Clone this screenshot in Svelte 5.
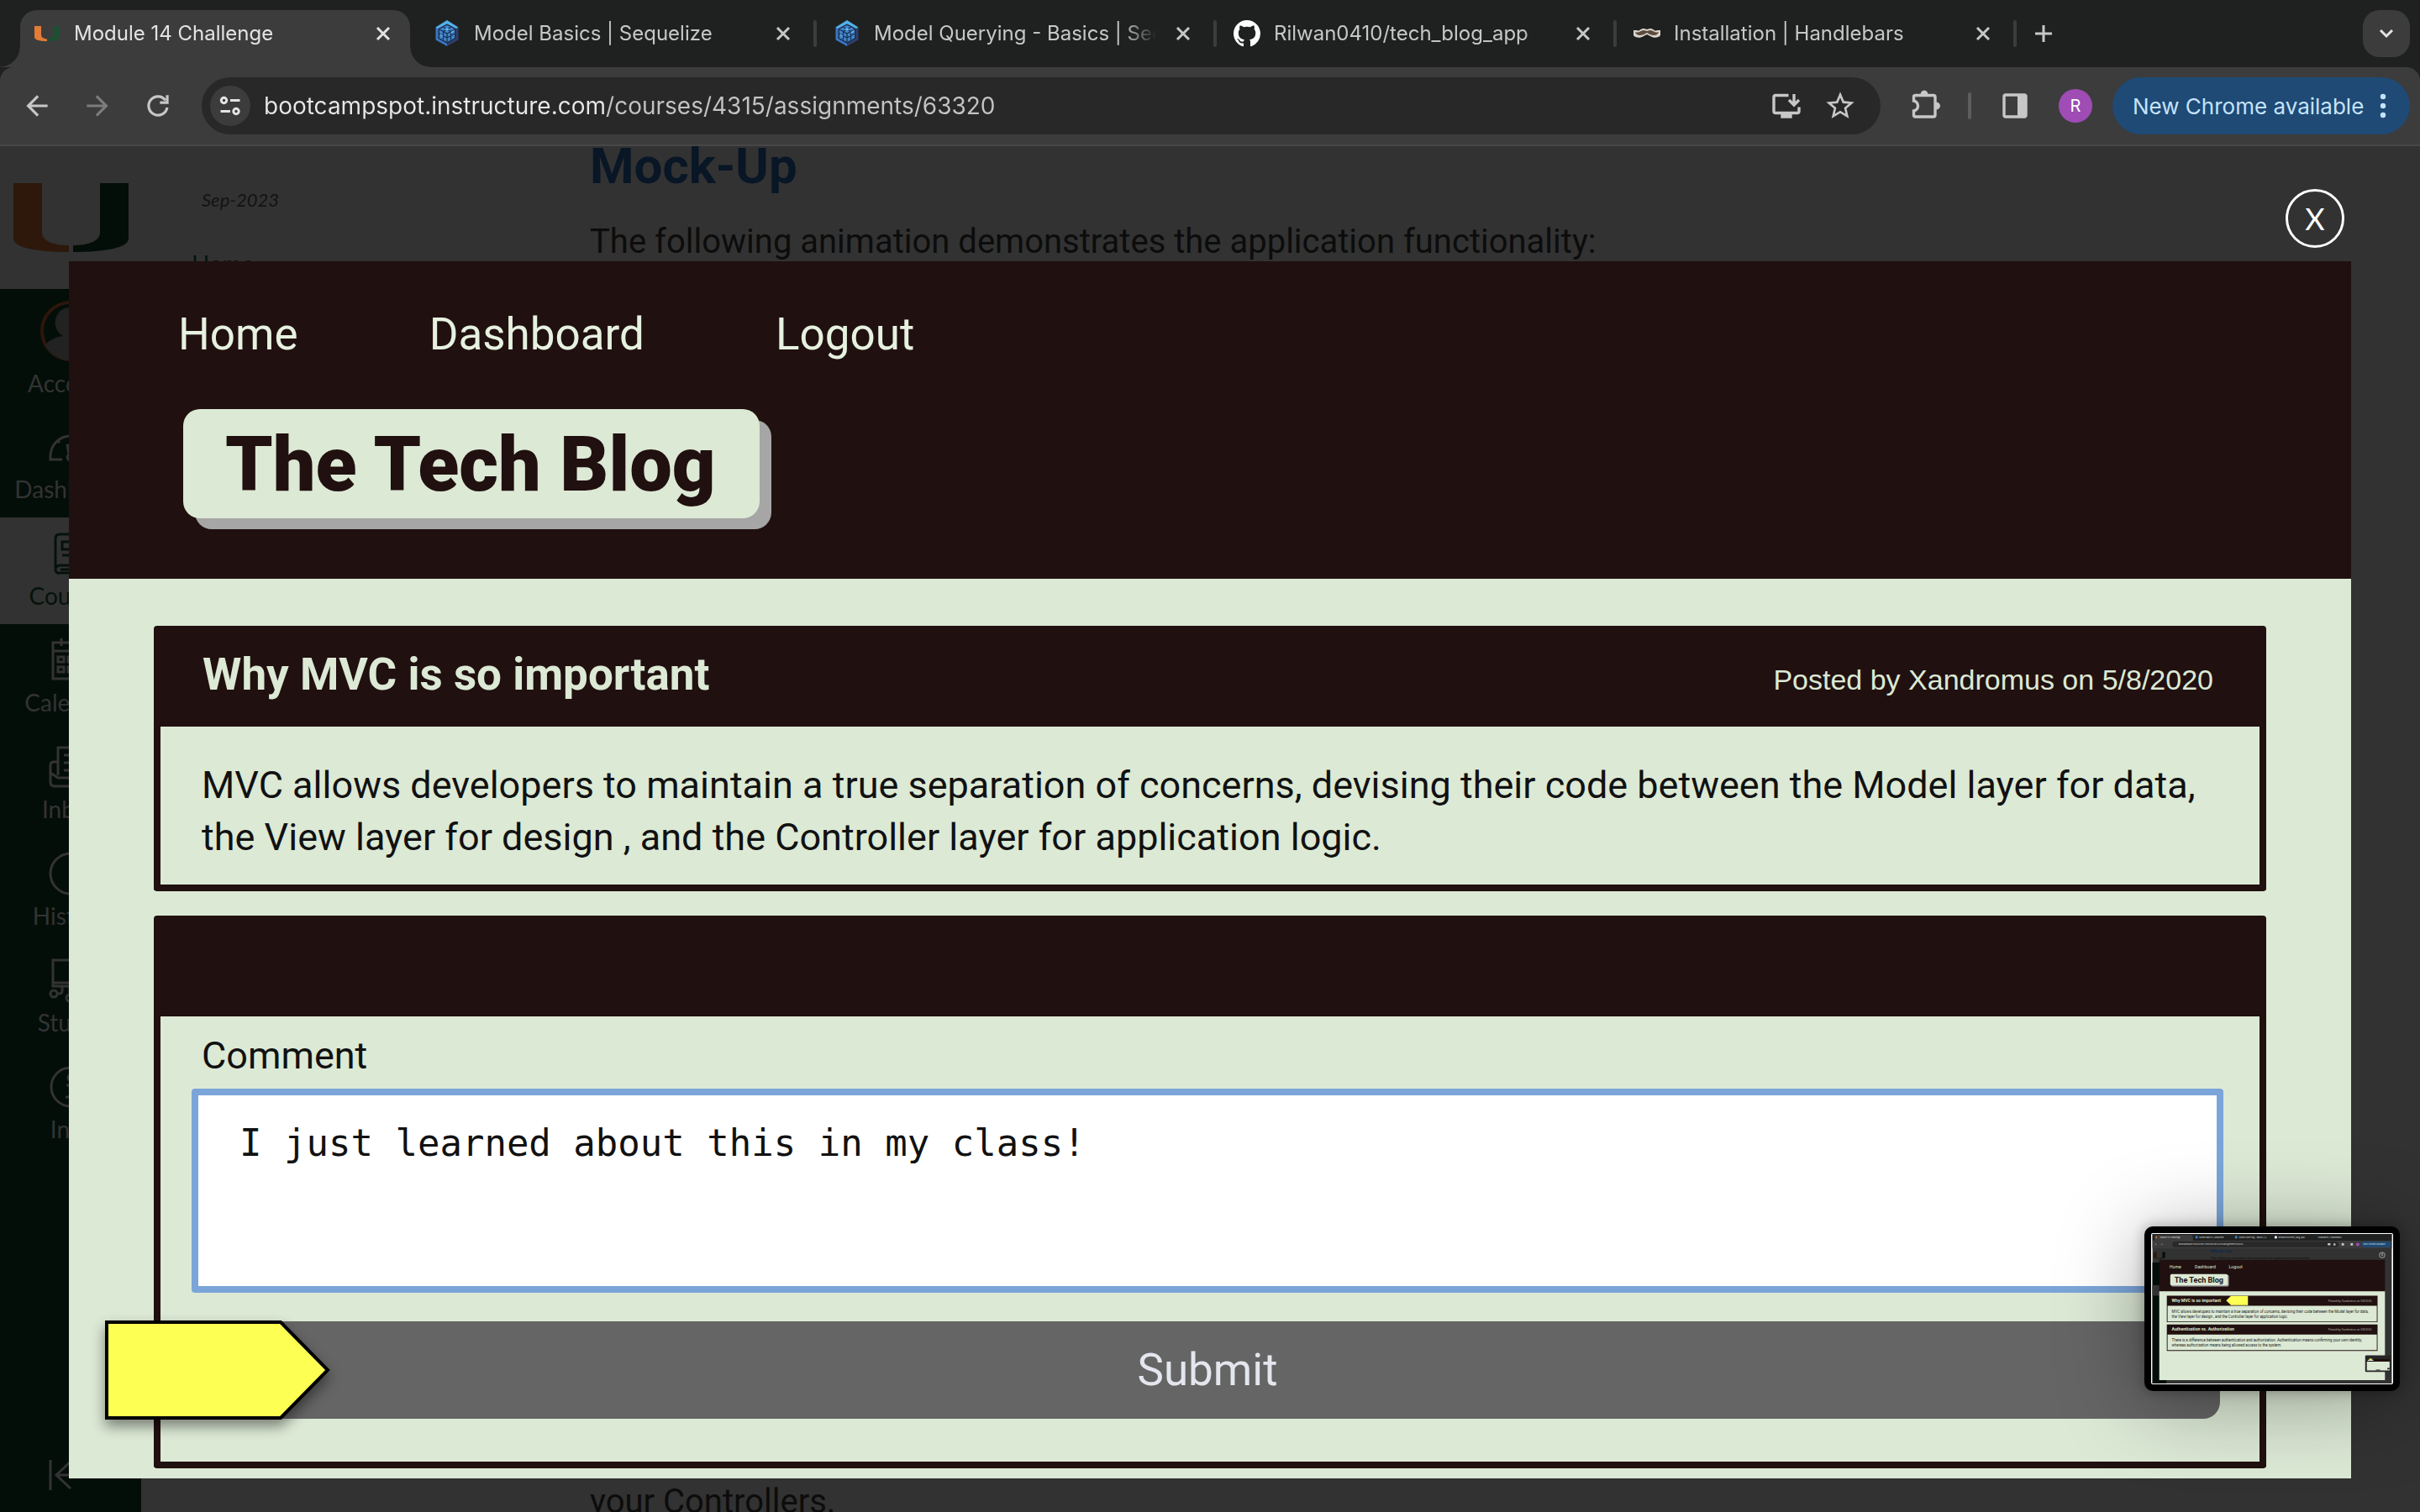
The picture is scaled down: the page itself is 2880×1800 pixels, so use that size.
<script>
  const tabs = [
    { title: 'Module 14 Challenge', icon: 'u', active: true },
    { title: 'Model Basics | Sequelize', icon: 'sequelize' },
    { title: 'Model Querying - Basics | Sequelize', icon: 'sequelize' },
    { title: 'Rilwan0410/tech_blog_app', icon: 'github' },
    { title: 'Installation | Handlebars', icon: 'handlebars' }
  ];
  const sideLinks = [
    { label: 'Dashboard', icon: 'dashboard' },
    { label: 'Courses', icon: 'courses', active: true },
    { label: 'Calendar', icon: 'calendar' },
    { label: 'Inbox', icon: 'inbox' },
    { label: 'History', icon: 'history' },
    { label: 'Studio', icon: 'studio' },
    { label: 'Info', icon: 'info' }
  ];
  let url = $state('bootcampspot.instructure.com/courses/4315/assignments/63320');
  let comment = $state('I just learned about this in my class!');
</script>

{#snippet favicon(name)}
  {#if name === 'u'}
    <svg class="favicon" viewBox="0 0 32 32" aria-hidden="true">
      <path fill="#e27c36" d="M1 7h8v10c0 3 2 5 7 5.400v2.600C6 25 1 23.500 1 20z" />
      <path fill="#1d5033" d="M31 7h-8v10c0 3-2 5-7 5.400v2.600c10 0 15-1.500 15-5z" />
    </svg>
  {:else if name === 'sequelize'}
    <svg class="favicon" viewBox="0 0 32 32" aria-hidden="true">
      <path fill="#3b76c3" d="M16 1 2.500 8.500v15L16 31z" />
      <path fill="#2f406a" d="M16 1l13.500 7.500v15L16 31z" />
      <path fill="#52b0e7" d="M16 0l13.500 8.500-3 1.500L16 4.500 5.500 10l-3-1.500z" />
      <path fill="#1d3050" d="M16 4.500 26.500 10v12L16 28 5.500 22V10z" />
      <path fill="#3f86cf" d="M16 6l9 4.800v10.400L16 26l-9-4.800V10.800z" />
      <path fill="none" stroke="#1d3050" stroke-width="1.300" d="M7 11l9 5 9-5M16 16v10M11.500 8.500l9 5v10M20.500 8.500l-9 5v10M7 16l9 5 9-5" />
      <path fill="#62b8ec" d="M16 9.200l3 1.700-3 1.700-3-1.700zM20.500 14l4-2v1.600l-4 2.200zM8 16.500l3 1.700v1.500l-3-1.700z" />
    </svg>
  {:else if name === 'github'}
    <svg class="favicon" viewBox="0 0 16 16" aria-hidden="true">
      <path fill="#fff" d="M8 0C3.580 0 0 3.580 0 8c0 3.540 2.290 6.530 5.470 7.590.4.070.55-.17.55-.38 0-.19-.01-.82-.01-1.490-2.010.37-2.530-.49-2.690-.94-.09-.23-.48-.94-.82-1.130-.28-.15-.68-.52-.01-.53.63-.01 1.080.58 1.230.82.72 1.210 1.870.87 2.330.66.07-.52.28-.87.51-1.070-1.780-.2-3.640-.89-3.640-3.950 0-.87.31-1.590.82-2.150-.08-.2-.36-1.020.08-2.120 0 0 .67-.21 2.200.82.64-.18 1.320-.27 2-.27s1.360.09 2 .27c1.530-1.040 2.200-.82 2.200-.82.44 1.100.16 1.920.08 2.120.51.56.82 1.270.82 2.150 0 3.070-1.870 3.750-3.650 3.950.29.25.54.73.54 1.480 0 1.070-.01 1.930-.01 2.200 0 .21.15.46.55.38A8.010 8.010 0 0 0 16 8c0-4.420-3.580-8-8-8z" />
    </svg>
  {:else}
    <svg class="favicon" viewBox="0 0 32 32" aria-hidden="true">
      <path fill="#d9d4ce" d="M0 12h4c3 2 4-2 8-2 2 0 3 1 4 1s2-1 4-1c4 0 5 4 8 2h4v6c-2 3-8 4-12 1l-4-2-4 2c-4 3-10 2-12-1z" />
      <path fill="#5c4a3d" d="M2 14c5 2 6-2 10-2 2 0 3 1 4 1s2-1 4-1c4 0 5 4 10 2-1 5-8 5-14 1-6 4-13 4-14-1z" />
    </svg>
  {/if}
{/snippet}

{#snippet sideIcon(name)}
  <svg class="side-icon" viewBox="0 0 52 52" aria-hidden="true">
    {#if name === 'dashboard'}
      <path d="M16 41H2v-4a24 24 0 0 1 48 0v4H36M10 18l3 3M42 18l-3 3M22 23l2 12a4 4 0 1 0 6 2z" />
    {:else if name === 'courses'}
      <path d="M8 44V8q0-5 5-5h31v37H14q-6 0-6 5t6 4h30M16 12h20v9H16zM16 28h20M14 45h28" />
    {:else if name === 'calendar'}
      <path d="M5 5h42v43H5zM5 15h42M15 0v9M37 0v9M11 22h7v6h-7zM23 22h7v6h-7zM35 22h7v6h-7zM11 34h7v6h-7zM23 34h7v6h-7z" />
    {:else if name === 'inbox'}
      <path d="M11 36V3h30v33M11 20H6q-4 0-4 4v20q0 5 5 5h38q5 0 5-5V24q0-4-4-4h-5M2 33l9 6h30l9-6M18 12h16M18 21h16M18 30h16" />
    {:else if name === 'history'}
      <path d="M26 2a24 24 0 1 1 0 48 24 24 0 1 1 0-48zM26 12v15l9 6" />
    {:else if name === 'studio'}
      <path d="M5 2h42v31H5zM5 29h42M16 34v5q0 3-5 3M25 34v8M36 34v8M30 12l9 5-9 5z" />
      <circle cx="6" cy="42" r="4" /><circle cx="25" cy="47" r="4" /><circle cx="42" cy="43" r="4" />
    {:else}
      <circle cx="26" cy="26" r="23" /><circle cx="26" cy="15" r="3" /><path d="M21 24h7v14M20 38h13" />
    {/if}
  </svg>
{/snippet}

<div class="browser">
  <header class="chrome">
    <div class="tab-strip">
      {#each tabs as tab, i}
        <div class="slot">
          <div class="tab" class:active={tab.active}>
            {@render favicon(tab.icon)}
            <span class="tab-title">{tab.title}</span>
            <button class="icon-button close" aria-label="Close tab">
              <svg viewBox="0 0 32 32"><path d="M9 9l14 14M23 9 9 23" /></svg>
            </button>
          </div>
          <span class="divider" class:hidden={i === 0}></span>
        </div>
      {/each}
      <button class="icon-button new-tab" aria-label="New tab">
        <svg viewBox="0 0 32 32"><path d="M16 6v20M6 16h20" /></svg>
      </button>
      <button class="tab-search" aria-label="Search tabs">
        <svg viewBox="0 0 32 32"><path d="M9 12l7 7 7-7" /></svg>
      </button>
    </div>

    <div class="toolbar">
      <div class="history-buttons">
        <button class="tool" aria-label="Back"><svg viewBox="0 0 24 24"><path d="M20 11H7.830l5.590-5.590L12 4l-8 8 8 8 1.410-1.410L7.830 13H20z" /></svg></button>
        <button class="tool dim" aria-label="Forward"><svg viewBox="0 0 24 24"><path d="M4 11h12.170l-5.590-5.590L12 4l8 8-8 8-1.410-1.410L16.170 13H4z" /></svg></button>
        <button class="tool line" aria-label="Reload"><svg viewBox="0 0 24 24"><path d="M18.900 13.200A7 7 0 1 1 17.600 7.800M19 4v5.500h-5.500" /></svg></button>
      </div>
      <div class="omnibox">
        <button class="site-info" aria-label="Site information">
          <svg viewBox="0 0 48 48"><circle cx="16.500" cy="17.500" r="3.200" /><circle cx="31" cy="30.500" r="3.200" /><path d="M24 17.500h11.500M12.500 30.500H24" /></svg>
        </button>
        <input class="url" aria-label="Address" bind:value={url} />
        <button class="tool line" aria-label="Install app">
          <svg viewBox="0 0 40 40"><path stroke-width="3.400" d="M22.500 7.500H7q-2 0-2 2v17q0 2 2 2h26q2 0 2-2v-5M29 6v12M23 13l6 6 6-6" /><path class="solid" d="M13.300 28h13.400v6.700H13.300z" /></svg>
        </button>
        <button class="tool" aria-label="Bookmark this tab">
          <svg viewBox="0 0 24 24"><path d="M22 9.240l-7.190-.62L12 2 9.190 8.630 2 9.240l5.460 4.730L5.820 21 12 17.270 18.180 21l-1.630-7.030zM12 15.400l-3.760 2.270 1-4.280-3.320-2.880 4.380-.38L12 6.100l1.710 4.040 4.380.38-3.320 2.880 1 4.280z" /></svg>
        </button>
      </div>
      <div class="actions">
        <button class="tool line" aria-label="Extensions">
          <svg viewBox="0 0 40 40"><path stroke-width="3.400" d="M7.500 14V9.500q0-2 2-2H31q2 0 2 2V31q0 2-2 2H9.500q-2 0-2-2v-5c3-.5 5-3 5-6s-2-5.500-5-6z" /><path class="solid" d="M15.500 7a4.500 5.500 0 0 1 9 0zM34 15.500a5 4.500 0 0 1 0 9z" /></svg>
        </button>
        <span class="tool-divider"></span>
        <button class="tool line" aria-label="Side panel">
          <svg viewBox="0 0 40 40"><rect x="7" y="7" width="26" height="26" rx="2" stroke-width="3.400" /><path class="solid" d="M23 7h10v26H23z" /></svg>
        </button>
        <button class="avatar" aria-label="Profile">R</button>
      </div>
      <button class="update">
        <span>New Chrome available</span>
        <svg viewBox="0 0 8 32"><circle cx="4" cy="5" r="3.200" /><circle cx="4" cy="16" r="3.200" /><circle cx="4" cy="27" r="3.200" /></svg>
      </button>
    </div>
  </header>

  <div class="viewport">
    <div class="page">
      <nav class="sidebar">
        <a class="logo" href="#home" aria-label="University home">
          <svg viewBox="0 0 137 82">
            <path fill="#2d180b" d="M0 0h34v59c0 9 12 15 32 15v8C28 82 0 77 0 66z" />
            <path fill="#040e09" d="M137 0h-34v59c0 9-12 15-32 15v8c38 0 66-5 66-16z" />
          </svg>
        </a>
        <a class="side-link account" href="#account">
          <svg class="portrait" viewBox="0 0 76 76" aria-hidden="true">
            <circle cx="38" cy="38" r="34" fill="#040e09" stroke="#2d160b" stroke-width="4" />
            <path fill="#222" d="M38 10a17 18 0 0 1 9 34c11 2 18 6 21 11a34 34 0 0 1-60 0c3-5 10-9 21-11a17 18 0 0 1 9-34z" />
          </svg>
          Account
        </a>
        {#each sideLinks as link}
          <a class="side-link" class:current={link.active} href="#{link.icon}">
            {@render sideIcon(link.icon)}
            {link.label}
          </a>
        {/each}
        <button class="collapse" aria-label="Minimize navigation">
          <svg viewBox="0 0 52 40"><path d="M2 2v36M50 20H10M26 4 9 20l17 16" /></svg>
        </button>
      </nav>
      <div class="course-menu">
        <span class="term">Sep-2023</span>
        <a href="#course-home">Home</a>
      </div>
      <article class="assignment">
        <div>
          <h2>Mock-Up</h2>
          <p>The following animation demonstrates the application functionality:</p>
        </div>
        <p>your Controllers.</p>
      </article>
    </div>

    <button class="dismiss" aria-label="Close preview">X</button>

    <section class="preview">
      <header class="blog-header">
        <nav class="blog-nav">
          <a href="#blog-home">Home</a>
          <a href="#blog-dashboard">Dashboard</a>
          <a href="#logout">Logout</a>
        </nav>
        <h1>The Tech Blog</h1>
      </header>
      <div class="posts">
        <article class="card">
          <header class="card-head">
            <h2>Why MVC is so important</h2>
            <span>Posted by Xandromus on 5/8/2020</span>
          </header>
          <p class="card-text">MVC allows developers to maintain a true separation of concerns, devising their code between the Model layer for data, the View layer for design , and the Controller layer for application logic.</p>
        </article>
        <form class="card" onsubmit={(e) => e.preventDefault()}>
          <header class="card-head"></header>
          <div class="fields">
            <label for="comment">Comment</label>
            <textarea id="comment" bind:value={comment}></textarea>
            <button class="submit">Submit</button>
          </div>
        </form>
      </div>
      <svg class="pointer" viewBox="0 0 268 118" aria-hidden="true">
        <path d="M2 2h207l56 57-56 57H2z" />
      </svg>
    </section>

    <div class="screen-thumb">
      <svg viewBox="0 0 2880 1800" role="img" aria-label="Earlier screen capture">
        <rect width="2880" height="1800" fill="#323232" />
        <rect width="2880" height="80" fill="#1f2120" />
        <path fill="#3c3c3c" d="M0 80h24V30q0-18 18-18h426q20 0 20 18v50h2392v94H0z" />
        <rect x="240" y="92" width="1998" height="68" rx="34" fill="#282828" />
        <rect x="2514" y="92" width="354" height="68" rx="34" fill="#1e4a75" />
        <circle cx="2470" cy="126" r="20" fill="#9f4cb5" />
        <g class="mini-chrome">
          <text x="89" y="49">Module 14 Challenge</text>
          <text x="564" y="49">Model Basics | Sequelize</text>
          <text x="1040" y="49">Model Querying - Basics | S</text>
          <text x="1516" y="49">Rilwan0410/tech_blog_app</text>
          <text x="1992" y="49">Installation | Handlebars</text>
          <text x="314" y="136">bootcampspot.instructure.com/courses/4315/assignments/63320</text>
          <text x="2537" y="136">New Chrome available</text>
          <text x="30" y="136">←</text><text x="100" y="136">→</text>
        </g>
        <path fill="#e27c36" d="M41 28h12v24H41z" />
        <path fill="#3f86cf" d="M518 26h26v28h-26zM994 26h26v28h-26z" />
        <circle cx="1484" cy="40" r="16" fill="#fff" />
        <path fill="#c7c7c7" d="M2110 112h32v24h-32zM2180 114h22v24h-22zM2276 112h29v28h-29zM2384 112h29v28h-29z" />
        <path fill="#040e09" d="M0 344h168v1456H0z" />
        <path fill="#323232" d="M0 616h168v127H0z" />
        <path fill="#2d180b" d="M16 218h34v64l32 10v8l-66-14z" />
        <path fill="#040e09" d="M153 218h-34v64l-32 10v8l66-14z" />
        <text class="mini-mock" x="703" y="218">Mock-Up</text>
        <text class="mini-para" x="703" y="301">The following animation demonstrates the application functionality:</text>
        <circle cx="2764" cy="254" r="33" fill="none" stroke="#eee" stroke-width="6" />
        <text class="mini-x" x="2752" y="267">X</text>
        <path fill="#211010" d="M82 311h2716v378H82z" />
        <path fill="#dce9d5" d="M82 689h2716v1071H82z" />
        <rect x="222" y="490" width="697" height="142" rx="20" fill="#a6a6a6" />
        <rect x="214" y="484" width="690" height="134" rx="20" fill="#dce9d5" />
        <text class="mini-title" x="264" y="586">The Tech Blog</text>
        <g class="mini-nav"><text x="206" y="412">Home</text><text x="510" y="412">Dashboard</text><text x="920" y="412">Logout</text></g>
        <path fill="#211010" d="M173 742h2536v320H173zM173 1089h2536v320H173z" />
        <path fill="#dce9d5" d="M182 865h2518v188H182zM182 1211h2518v188H182z" />
        <g class="mini-heading"><text x="232" y="820">Why MVC is so important</text><text x="232" y="1166">Authentication vs. Authorization</text></g>
        <g class="mini-meta"><text x="2114" y="818">Posted by Xandromus on 5/8/2020</text><text x="2114" y="1166">Posted by Xandromus on 5/8/2020</text></g>
        <g class="mini-body">
          <text x="232" y="950">MVC allows developers to maintain a true separation of concerns, devising their code between the Model layer for data,</text>
          <text x="232" y="1012">the View layer for design , and the Controller layer for application logic.</text>
          <text x="232" y="1298">There is a difference between authentication and authorization. Authentication means confirming your own identity,</text>
          <text x="232" y="1360">whereas authorization means being allowed access to the system.</text>
        </g>
        <path fill="#feff53" d="M887 802l58-57h204v113H945z" />
        <rect x="2560" y="1461" width="310" height="199" rx="12" fill="#262626" />
        <path fill="#211010" d="M2580 1506h274v30h-274z" />
        <path fill="#dce9d5" d="M2580 1536h274v108h-274zM2590 1514h68v14h-68z" />
        <path fill="#feff53" d="M2610 1500h30v16h-30z" />
        <path fill="#262626" d="M2690 1634h50v10h-50zM2826 1612h28v18h-28z" />
      </svg>
    </div>
  </div>
</div>

<style>
  :global(body) { margin: 0; }
  * { box-sizing: border-box; }
  button { border: 0; padding: 0; background: none; font: inherit; color: inherit; cursor: pointer; }
  a { text-decoration: none; color: inherit; }
  h1, h2, p { margin: 0; }
  svg { display: block; }

  .browser {
    display: flex;
    flex-direction: column;
    height: 100vh;
    overflow: hidden;
    background: #323232;
    font-family: Roboto, sans-serif;
  }
  .chrome { background: #1f2120; font-family: Inter, sans-serif; color: #c7c7c7; }

  /* Tabs */
  .tab-strip { display: flex; align-items: flex-start; height: 80px; padding: 12px 12px 0 24px; }
  .slot { display: flex; flex: 0 1 476px; min-width: 0; }
  .tab {
    position: relative;
    display: flex;
    flex: 1;
    min-width: 0;
    align-items: center;
    gap: 16px;
    height: 68px;
    padding: 0 16px 12px;
    font-size: 24px;
    line-height: 32px;
  }
  .tab.active { background: #3c3c3c; border-radius: 20px 20px 0 0; color: #e3e3e3; }
  .tab.active::before, .tab.active::after {
    content: '';
    position: absolute;
    bottom: 0;
    width: 24px;
    height: 24px;
  }
  .tab.active::before { right: 100%; background: radial-gradient(circle at 0 0, transparent 23px, #3c3c3c 24px); }
  .tab.active::after { left: 100%; background: radial-gradient(circle at 100% 0, transparent 23px, #3c3c3c 24px); }
  .favicon { flex: none; width: 32px; height: 32px; }
  .tab-title {
    flex: 1;
    min-width: 0;
    overflow: hidden;
    white-space: nowrap;
    mask-image: linear-gradient(to right, #000 calc(100% - 40px), transparent);
  }
  .icon-button { flex: none; width: 32px; height: 32px; }
  .icon-button svg, .tab-search svg { width: 32px; height: 32px; fill: none; stroke: currentColor; stroke-width: 3; }
  .divider { flex: none; width: 4px; height: 32px; margin: 12px 4px 0; border-radius: 2px; background: #3c3c3c; }
  .divider.hidden { visibility: hidden; }
  .new-tab { margin: 12px 0 0 12px; }
  .tab-search {
    display: grid;
    place-items: center;
    flex: none;
    width: 56px;
    height: 56px;
    margin-left: auto;
    border-radius: 20px;
    background: #3c3c3c;
    color: #e3e3e3;
  }

  /* Toolbar */
  .toolbar {
    display: flex;
    align-items: center;
    height: 94px;
    padding: 12px 12px 12px 24px;
    border-bottom: 2px solid #474747;
    border-radius: 16px 16px 0 0;
    background: #3c3c3c;
  }
  .history-buttons { display: flex; gap: 32px; width: 216px; }
  .tool { flex: none; width: 40px; height: 40px; color: #c7c7c7; }
  .tool svg { width: 40px; height: 40px; fill: currentColor; }
  .history-buttons .tool svg { width: 38px; height: 38px; margin: 1px; }
  .tool.dim { color: #7c7c7c; }
  .tool.line svg { fill: none; stroke: currentColor; stroke-width: 2; }
  .tool.line .solid { fill: currentColor; stroke: none; }
  .omnibox {
    display: flex;
    flex: 1;
    align-items: center;
    gap: 24px;
    height: 68px;
    padding: 0 28px 0 10px;
    border-radius: 34px;
    background: #282828;
  }
  .site-info { flex: none; width: 48px; height: 48px; margin-right: -8px; border-radius: 50%; background: #3c3c3c; }
  .site-info svg { fill: none; stroke: #e3e3e3; stroke-width: 3; }
  .url {
    flex: 1;
    min-width: 0;
    height: 40px;
    padding: 0;
    border: 0;
    outline: 0;
    background: linear-gradient(to right, #e8e8e8 408px, #c4c4c4 408px);
    background-clip: text;
    color: transparent;
    font: 28px/40px Inter, sans-serif;
  }
  .actions { display: flex; align-items: center; gap: 32px; margin: 0 24px 0 32px; }
  .tool-divider { width: 4px; height: 32px; border-radius: 2px; background: #5e5e5e; }
  .avatar { width: 40px; height: 40px; border-radius: 50%; background: #9f4cb5; color: #fff; font-size: 20px; }
  .update {
    display: flex;
    align-items: center;
    justify-content: space-between;
    width: 354px;
    height: 68px;
    padding: 0 28px 0 24px;
    border-radius: 34px;
    background: #1e4a75;
    color: #c5e3fc;
    font-size: 26px;
    white-space: nowrap;
  }
  .update svg { width: 8px; height: 32px; fill: currentColor; }

  /* Course page behind the preview */
  .viewport { position: relative; flex: 1; min-height: 0; overflow: hidden; }
  .page { display: flex; height: 100%; }
  .sidebar {
    display: flex;
    flex-direction: column;
    flex: none;
    width: 168px;
    background: #040e09;
    color: #333;
    font-family: Lato, sans-serif;
    font-size: 28px;
    line-height: 36px;
  }
  .logo { flex: none; height: 170px; padding: 44px 16px; background: #323232; }
  .logo svg { width: 137px; height: 82px; }
  .side-link {
    display: flex;
    flex: none;
    flex-direction: column;
    align-items: center;
    gap: 6px;
    height: 127px;
    padding-top: 17px;
  }
  .side-link.account { height: 145px; padding-top: 12px; }
  .side-link.current { background: #323232; color: #04120b; }
  .portrait { width: 76px; height: 76px; }
  .side-icon { width: 52px; height: 52px; fill: none; stroke: currentColor; stroke-width: 3; }
  .collapse { width: 52px; height: 40px; margin: auto 58px 24px; }
  .collapse svg { fill: none; stroke: currentColor; stroke-width: 3; }
  .course-menu {
    display: flex;
    flex: none;
    flex-direction: column;
    gap: 40px;
    width: 534px;
    padding: 48px 60px 0 60px;
    color: #04150d;
    font: 28px/40px Lato, sans-serif;
  }
  .term { padding-left: 12px; color: #131313; font-size: 22px; line-height: 32px; font-style: italic; }
  .assignment {
    display: flex;
    flex: 1;
    flex-direction: column;
    justify-content: space-between;
    color: #0c0c0c;
    font-size: 40px;
    line-height: 48px;
  }
  .assignment h2 { margin-bottom: 42px; color: #081626; font-size: 60px; line-height: 48px; font-weight: 700; }
  .assignment > p { margin-bottom: -12px; }

  .dismiss {
    position: absolute;
    top: 51px;
    right: 90px;
    width: 70px;
    height: 70px;
    border: 3px solid #fff;
    border-radius: 50%;
    color: #fff;
    font: 36px/64px Lato, sans-serif;
  }

  /* Blog preview */
  .preview { position: absolute; inset: 137px 82px 40px; background: #dce9d5; }
  .blog-header { height: 378px; padding: 57px 130px 0; background: #211010; color: #e6f1e0; }
  .blog-nav { display: flex; gap: 156px; margin-bottom: 59px; font-size: 53px; line-height: 60px; }
  h1 {
    width: fit-content;
    margin-left: 6px;
    padding: 4px 52px 0 50px;
    border-radius: 20px;
    background: #dce9d5;
    box-shadow: 14px 13px #a6a6a6;
    color: #211010;
    font-size: 90px;
    line-height: 126px;
    font-weight: 900;
  }
  .posts { display: flex; flex-direction: column; gap: 29px; padding: 56px 101px 12px; }
  .card { border: 8px solid #211010; border-top: 0; border-radius: 4px; }
  .card-head {
    display: flex;
    align-items: baseline;
    justify-content: space-between;
    height: 120px;
    padding: 28px 55px 0 50px;
    background: #211010;
    color: #dce9d5;
  }
  .card-head h2 { font-size: 53px; line-height: 60px; font-weight: 700; }
  .card-head span { font: 34px/40px "Liberation Sans", sans-serif; }
  .card-text { padding: 39px 44px 25px 49px; color: #111; font-size: 45px; line-height: 62px; }
  .fields { display: flex; flex-direction: column; padding: 16px 43px 51px 37px; }
  label { padding-left: 12px; color: #111; font-size: 45px; line-height: 62px; }
  textarea {
    display: block;
    height: 243px;
    margin: 8px 0 34px;
    padding: 27px 49px;
    border: 8px solid #7ba5d8;
    border-radius: 4px;
    outline: 0;
    resize: none;
    background: #fff;
    color: #111;
    font: 44px/60px "DejaVu Sans Mono", monospace;
  }
  .submit {
    height: 116px;
    margin: 0 4px;
    border-radius: 20px;
    background: #656565;
    color: #e4e6ee;
    font-size: 53px;
  }
  .pointer {
    position: absolute;
    left: 43px;
    bottom: 70px;
    width: 268px;
    height: 118px;
    overflow: visible;
    filter: drop-shadow(0 8px 8px rgba(0, 0, 0, 0.45));
  }
  .pointer path { fill: #feff53; stroke: #000; stroke-width: 4; }

  /* Floating capture */
  .screen-thumb {
    position: absolute;
    right: 24px;
    bottom: 144px;
    width: 304px;
    height: 196px;
    border: 8px solid #000;
    border-radius: 10px;
    background: #fff;
    padding: 1px;
    box-shadow: 0 10px 100px rgba(0, 0, 0, 0.35), 0 0 16px rgba(0, 0, 0, 0.3);
  }
  .screen-thumb svg { width: 100%; height: 100%; }
  .mini-chrome { font: 25px Inter, sans-serif; fill: #ddd; }
  .mini-mock { font: 700 60px Roboto, sans-serif; fill: #10294a; }
  .mini-para { font: 40px Roboto, sans-serif; fill: #0c0c0c; }
  .mini-x { font: 36px Lato, sans-serif; fill: #eee; }
  .mini-title { font: 700 92px Roboto, sans-serif; fill: #211010; }
  .mini-nav { font: 52px Roboto, sans-serif; fill: #dce9d5; }
  .mini-heading { font: 700 52px Roboto, sans-serif; fill: #dce9d5; }
  .mini-meta { font: 34px "Liberation Sans", sans-serif; fill: #b3b3ac; }
  .mini-body { font: 45px Roboto, sans-serif; fill: #222; }
</style>
